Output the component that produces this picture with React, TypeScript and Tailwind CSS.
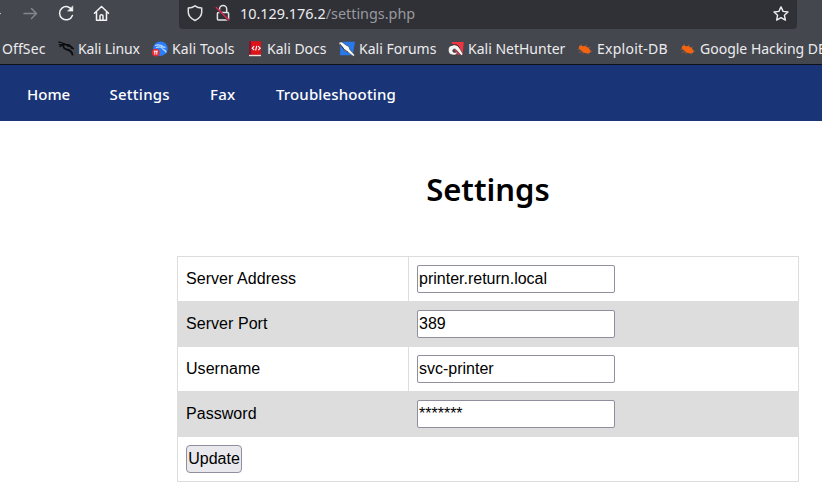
import type { ReactNode } from 'react';

const DragonIcon = () => (
  <svg viewBox="0 0 16 16" className="mt-px h-4 w-4" fill="none" stroke="#0b0c0e">
    <path d="M.3.9 4.5 2l2.5 1.3 4 .3 2.2 2.3M.8 3.7l4.9-.3M1.5 5.6l3.5-1.7" strokeWidth="1.2" />
    <path d="M5 2.9c2 .7 4 .8 5.4 2M5.5 3.3C4.8 6 6 7.8 9 8.5c3 .6 5 1.8 5.7 5.8" strokeWidth="1.8" />
    <path d="M9.5 5l3.8.6 1.9 2-2.7-.7" strokeWidth="1.3" />
  </svg>
);
const ToolsIcon = () => (
  <svg viewBox="0 0 16 16" className="mt-px h-4 w-4">
    <circle cx="8.4" cy="7.7" r="7.3" fill="#2c7dfa" />
    <path d="M3 4.5c4-1.2 7-.3 9 2M4 6.7c3-1.3 5.4-.8 6.3.8 1 1.6 3.2 1.4 3.9 4M9.5 5.5l4 .8" stroke="#b9dcff" strokeWidth="1.2" fill="none" />
    <circle cx="3.8" cy="11.6" r="3.9" fill="#e52b34" />
    <path d="M1.8 10.2h4M2.8 10.2v3.3M4.8 10.2v3.3" stroke="#fff" strokeWidth="1" />
  </svg>
);
const DocsIcon = () => (
  <svg viewBox="0 0 16 16" className="mt-px h-4 w-4">
    <path d="M2 .2h12v13.6H2z" fill="#df1219" />
    <path d="M2 .2h2.2v13.6H2z" fill="#7f1632" />
    <path d="M2 13.8h12v1.4H2z" fill="#f2dcda" />
    <path d="m7.2 5.2-2 2 2 2m4-4 2 2-2 2M9.8 4.9l-1.2 4.6" fill="none" stroke="#fff" strokeWidth="1.1" />
  </svg>
);
const ForumsIcon = () => (
  <svg viewBox="0 0 16 16" className="mt-px h-4 w-4">
    <path d="M1.5.7H16l-2.2 13.5H1z" fill="#2879eb" />
    <path d="M0 1.2 3 1l4.2 3.2 2.6 1.4 1.2 3.2 4.7 5.2-1.2 1.4-5.5-4.2-3.4-1.2-1.5-3.4L.3 3.4z" fill="#f7f7f4" stroke="#272b31" strokeWidth=".5" />
    <path d="m1 3 4 5.4 4 2.6" fill="none" stroke="#272b31" strokeWidth=".8" />
  </svg>
);
const NetHunterIcon = () => (
  <svg viewBox="0 0 16 16" className="mt-px h-4 w-4">
    <path d="M3.5 1h12.2l-1 12.5H9z" fill="#ef333f" />
    <path d="M1 6.2C4 2.8 9.2 2.8 11.4 7l3.6 6-1.6 1.6-5-5.6C6.6 7 4.6 8 4.7 9.9c.2 1.8 2.4 2.2 4.5.8.2 2.9-2.7 4-5.2 3C.4 13.3-.4 9.4 1 6.2z" fill="#f5f4f4" stroke="#35292e" strokeWidth=".5" />
    <path d="M3 4.6C6.6 2.7 9.6 3.6 11.6 6.6" fill="none" stroke="#35292e" strokeWidth=".9" />
  </svg>
);
const BugIcon = () => (
  <svg viewBox="0 0 16 16" className="mt-px h-4 w-4">
    <path d="m2 5.3 1.8-1 1.8.9 2.8-.2 3.3 2 1.8 2.5-.1 2.3-2.9.8-3.6-.8-2.8-2.4-2.3-1.9z" fill="#f36310" />
    <path d="M4.6 4.7 4.2 3.2M8 5.4l1.6-1.9M11 7.3l2.2-1.5M3 8l-2.4.5M5 10l-3 1.6M7 11.4l-2 1.2M12.5 10.3h2.7M10.5 12l1.2 1.6" stroke="#b9683f" strokeWidth=".6" />
  </svg>
);

type Bookmark = { label: string; layout: string; icon: ReactNode };
const bookmarks: Bookmark[] = [
  { label: 'Kali Linux', layout: 'w-[94px] tracking-[-0.12px]', icon: <DragonIcon /> },
  { label: 'Kali Tools', layout: 'w-[95px] tracking-[0.1px]', icon: <ToolsIcon /> },
  { label: 'Kali Docs', layout: 'w-[92px]', icon: <DocsIcon /> },
  { label: 'Kali Forums', layout: 'w-[109px]', icon: <ForumsIcon /> },
  { label: 'Kali NetHunter', layout: 'w-[129px]', icon: <NetHunterIcon /> },
  { label: 'Exploit-DB', layout: 'w-[103px] tracking-[0.25px]', icon: <BugIcon /> },
  { label: 'Google Hacking DB', layout: 'w-[150px]', icon: <BugIcon /> },
];

const fields = [
  ['Server Address', 'printer.return.local'],
  ['Server Port', '389'],
  ['Username', 'svc-printer'],
  ['Password', '*******'],
];

function BrowserBar() {
  return (
    <header className="h-[65px] overflow-hidden border-b border-[#101114] bg-[#45474e] font-['Noto_Sans',sans-serif] text-[#ececef]">
      <div className="flex h-[29px]">
        <div className="flex w-[179px] shrink-0 items-start">
          <svg width="179" height="29" fill="none" stroke="#f4f4f5" strokeWidth="1.5" strokeLinecap="round" strokeLinejoin="round">
            <path d="M-3 13.5h3" />
            <path d="M24 13.5h12M31.5 8.5l5 5-5 5" stroke="#85868c" />
            <path d="M72.2 10.5a6.6 6.6 0 1 0 .2 4.9" />
            <path d="M72.8 6.2v4.9h-4.9z" fill="#f4f4f5" strokeWidth=".6" />
            <path d="m94.5 13.3 7-6.8 7 6.8M96.5 12v8.2h10V12M100 20v-4.2q0-1 1.5-1t1.5 1V20" />
          </svg>
        </div>
        <div className="flex w-[618px] shrink-0 items-center rounded-b bg-[#303136]">
          <svg className="h-[29px] w-[61px] shrink-0" fill="none" stroke="#e2e2e5" strokeWidth="1.5" strokeLinecap="round" strokeLinejoin="round">
            <path d="M16 5.8c2.1 1.6 4.2 2.2 6.7 2.3v4.2c0 3.8-2.5 6.2-6.7 8.2-4.2-2-6.7-4.4-6.7-8.2V8.1c2.5-.1 4.6-.7 6.7-2.3z" />
            <path d="M40.5 12V9.2a3.6 3.6 0 0 1 7.2 0V12M39.4 12.5h9.2q1 0 1 1v5.5q0 1-1 1h-9.2q-1 0-1-1v-5.5q0-1 1-1z" />
            <path d="m37.3 8 12 12" stroke="#303136" strokeWidth="2.4" />
            <path d="m37.3 7.5 12.5 12.5" stroke="#e22850" strokeWidth="1.4" />
          </svg>
          <span className="pb-px text-[14.4px] leading-[26px] whitespace-nowrap">10.129.176.2<span className="text-[#98999f]">/settings.php</span></span>
          <svg className="mr-[8px] mb-[2px] ml-auto h-4 w-4" viewBox="0 0 16 16" fill="none" stroke="#eeeeef" strokeWidth="1.4" strokeLinejoin="round">
            <path d="m8 .9 2.1 4.5 4.9.6-3.6 3.3 1 4.8L8 11.7l-4.4 2.4 1-4.8L1 6l4.9-.6z" />
          </svg>
        </div>
      </div>
      <nav className="flex h-[35px] items-center pt-[3px] text-[14px] whitespace-nowrap">
        <span className="w-[58px] shrink-0 pl-[2px] tracking-[0.1px]">OffSec</span>
        {bookmarks.map(({ label, layout, icon }) => (
          <span key={label} className={`${layout} flex shrink-0 items-center gap-1`}>{icon}{label}</span>
        ))}
      </nav>
    </header>
  );
}

export default function App() {
  return (
    <div className="h-[497px] w-[822px] overflow-hidden bg-white text-black">
      <BrowserBar />
      <nav className="flex h-[56px] items-center bg-[#1a3478] pt-[2px] pl-[27px] font-['Noto_Sans',sans-serif] text-[15px] font-medium text-white">
        <span className="w-[82.5px]">Home</span>
        <span className="w-[100.5px] tracking-[0.25px]">Settings</span>
        <span className="w-[66px] tracking-[0.3px]">Fax</span>
        <span className="tracking-[0.15px]">Troubleshooting</span>
      </nav>
      <main className="pt-[46px] pl-[177px] font-['Liberation_Sans',sans-serif] text-[16px]">
        <h1 className="h-[89px] w-[622px] text-center font-['Noto_Sans',sans-serif] text-[31px] leading-[45px] font-semibold">Settings</h1>
        <table className="h-[226px] w-[622px] table-fixed border-collapse">
          <colgroup><col className="w-[231px]" /><col /></colgroup>
          <tbody>
            {fields.map(([label, value]) => (
              <tr key={label} className="h-[45px] even:bg-[#ddd]">
                <td className="border border-[#ddd] px-2 py-0 tracking-[0.05px]">{label}</td>
                <td className="border border-[#ddd] px-2 py-0">
                  <input aria-label={label} defaultValue={value} className="block h-7 w-[198px] rounded-[2px] border border-[#8f8f9d] bg-white px-px outline-none" />
                </td>
              </tr>
            ))}
            <tr className="h-[45px]">
              <td colSpan={2} className="border border-[#ddd] px-2 py-0">
                <button className="block h-7 w-[56px] rounded border border-[#8f8f9d] bg-[#e9e9ed] p-0">Update</button>
              </td>
            </tr>
          </tbody>
        </table>
      </main>
    </div>
  );
}
